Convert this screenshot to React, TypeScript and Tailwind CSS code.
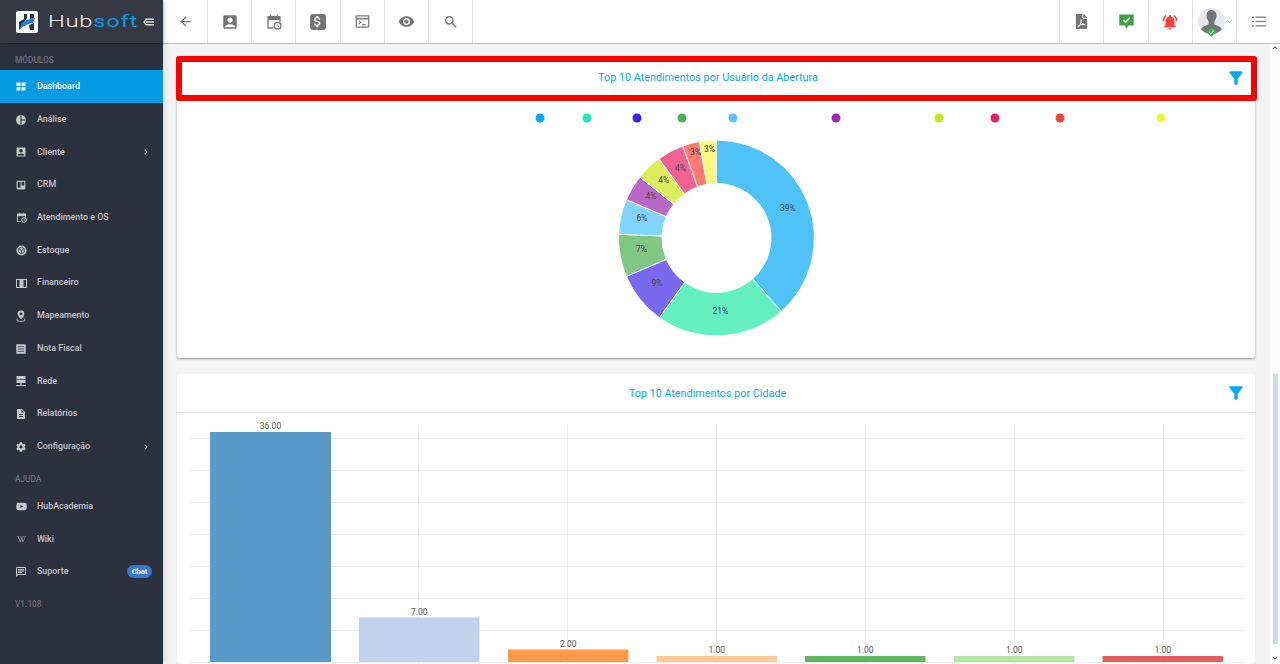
import React from "react";
import { MdAccountBox, MdArrowBack, MdFilterAlt, MdNotificationsActive, MdPieChart, MdSearch, MdVisibility, MdOutlineChat, MdExpandMore, MdExpandLess, MdDescription, MdAttachMoney } from "react-icons/md";
import { FaWikipediaW, FaYoutube, FaTrello, FaFilePdf, FaCog, FaChevronRight } from "react-icons/fa";

const CalClock = ({ size = 16 }: { size?: number }) => (
  <svg width={size} height={size} viewBox="0 0 24 24" fill="currentColor">
    <path d="M6 1h2v3H6zM16 1h2v3h-2z" />
    <path fillRule="evenodd" d="M3 3h18a1 1 0 0 1 1 1v8h-2V9H4v11h7v2H3a1 1 0 0 1-1-1V4a1 1 0 0 1 1-1z" />
    <path fillRule="evenodd" d="M17.500 11.500a6 6 0 1 1 0 12 6 6 0 0 1 0-12zm0 2a4 4 0 1 0 0 8 4 4 0 0 0 0-8zM17 14.500h1.300v3l2 1.200-.6 1-2.700-1.600z" />
  </svg>
);

const DashIcon = () => (
  <svg width="10" height="9" viewBox="0 0 10 9" fill="#fff">
    <path d="M0.500 0.500h4v3.500h-4zM5.500 0.500h4v3.500h-4zM0.500 5h4v3.500h-4zM5.500 5h4v3.500h-4z" />
  </svg>
);

const StockIcon = () => (
  <svg width="11" height="11" viewBox="0 0 11 11">
    <circle cx="5.500" cy="5.500" r="5" fill="currentColor" />
    <path d="M5.500 2.200l2.800 1.500v3.400L5.500 8.800 2.700 7.100V3.700zM2.700 3.700l2.800 1.700 2.800-1.700M5.500 5.400v3.400" fill="none" stroke="#2d303d" strokeWidth="0.8" />
  </svg>
);

const MoneyIcon = () => (
  <svg width="11" height="9" viewBox="0 0 11 9">
    <rect x="0.500" y="0.500" width="10" height="8" fill="none" stroke="currentColor" />
    <rect x="3.500" y="1" width="4" height="7" fill="currentColor" />
  </svg>
);

const MapIcon = () => (
  <svg width="10" height="12" viewBox="0 0 10 12">
    <path fillRule="evenodd" d="M5 0.500a3.400 3.400 0 0 1 3.400 3.400C8.400 6.200 5 9 5 9S1.600 6.200 1.600 3.900A3.400 3.400 0 0 1 5 0.500zm0 2a1.400 1.400 0 1 0 0 2.800 1.400 1.400 0 0 0 0-2.800z" fill="currentColor" />
    <path d="M2 8.800C1 9.200 0.700 9.600 0.700 10c0 .8 2 1.400 4.300 1.400s4.300-.6 4.300-1.400c0-.4-.3-.8-1.300-1.200" fill="none" stroke="currentColor" />
  </svg>
);

const NoteIcon = () => (
  <svg width="10" height="10" viewBox="0 0 10 10">
    <rect width="9.500" height="9.500" x="0.250" y="0.250" rx="0.500" fill="currentColor" />
    <path d="M1.800 2.700h6.400M1.800 5h6.400M1.800 7.300h6.400" stroke="#2d303d" strokeWidth="0.8" />
  </svg>
);

const NetIcon = () => (
  <svg width="10" height="11" viewBox="0 0 10 11" fill="currentColor">
    <rect x="0.500" y="0" width="9" height="3.200" />
    <rect x="0.500" y="3.800" width="9" height="3.200" />
    <rect x="4.400" y="7" width="1.200" height="2.500" />
    <rect x="0" y="9" width="10" height="1" />
  </svg>
);

const Terminal = ({ size = 16 }: { size?: number }) => (
  <svg width={size} height={size} viewBox="0 0 24 24" fill="none" stroke="currentColor" strokeWidth="2">
    <rect x="2" y="3" width="20" height="18" rx="1" />
    <path d="M2 7.500h20" strokeWidth="2.500" />
    <path d="M6 11l3 2.500L6 16M11.500 17H17" strokeWidth="1.800" />
  </svg>
);

const MsgCheck = () => (
  <svg width="15" height="15" viewBox="0 0 15 15">
    <path d="M1 0.500h13a.7.7 0 0 1 .7.7V10.800a.7.7 0 0 1-.7.7H9.500L7.500 14.500 5.500 11.500H1a.7.7 0 0 1-.7-.7V1.200A.7.7 0 0 1 1 .5z" fill="#43a047" />
    <path d="M4.500 6l2.200 2.200L10.700 3.800" fill="none" stroke="#fff" strokeWidth="1.500" />
  </svg>
);

const ListIcon = () => (
  <svg width="14" height="11" viewBox="0 0 14 11" fill="#8a8a8a">
    <rect x="0" y="0.500" width="2" height="1.400" />
    <rect x="3.500" y="0.500" width="10.500" height="1.400" />
    <rect x="0" y="4.800" width="2" height="1.400" />
    <rect x="3.500" y="4.800" width="10.500" height="1.400" />
    <rect x="0" y="9.100" width="2" height="1.400" />
    <rect x="3.500" y="9.100" width="10.500" height="1.400" />
  </svg>
);

const Avatar = () => (
  <svg width="27" height="30" viewBox="0 0 27 30">
    <circle cx="13.500" cy="14.500" r="13.500" fill="#e7e8ea" />
    <path d="M13.500 3c3.400 0 5 2.500 5 5.600 0 2.200-.9 4.400-2.100 5.600v3l5.600 2.800c1 .6 1.600 1.400 1.800 2.200A13.500 13.500 0 0 1 3.200 22.200c.2-.8.8-1.600 1.800-2.200l5.600-2.800v-3C9.400 13 8.500 10.800 8.500 8.600 8.500 5.500 10.100 3 13.500 3z" fill="#727477" />
    <path d="M8 25l5.500-4.500L19 25l-5.500 4.800z" fill="#4caf50" />
    <path d="M11 24.800l1.800 1.700 3.300-3" stroke="#fff" fill="none" strokeWidth="0.800" />
  </svg>
);

const Logo = () => (
  <svg width="22" height="22" viewBox="0 0 22 22">
    <rect width="22" height="22" rx="2" fill="#fff" />
    <path d="M3 19V11L8 8V3h3v4L3 19z" fill="#2d303d" />
    <path d="M3 19l3-7c3-3 8-4 13-5l-2 5c-4 .5-8 2-14 7z" fill="#1f7fd6" />
    <path d="M14 3h4v4l-4 1zM13 14l5-2v7h-4z" fill="#2d303d" />
  </svg>
);

type Item = { label: string; icon: React.ReactNode; active?: boolean; arrow?: boolean; badge?: string };

const modules: Item[] = [
  { label: "Dashboard", icon: <DashIcon />, active: true },
  { label: "Análise", icon: <MdPieChart size={12} /> },
  { label: "Cliente", icon: <MdAccountBox size={12} />, arrow: true },
  { label: "CRM", icon: <FaTrello size={10} /> },
  { label: "Atendimento e OS", icon: <CalClock size={11} /> },
  { label: "Estoque", icon: <StockIcon /> },
  { label: "Financeiro", icon: <MoneyIcon /> },
  { label: "Mapeamento", icon: <MapIcon /> },
  { label: "Nota Fiscal", icon: <NoteIcon /> },
  { label: "Rede", icon: <NetIcon /> },
  { label: "Relatórios", icon: <MdDescription size={12} /> },
  { label: "Configuração", icon: <FaCog size={10} />, arrow: true },
];
const help: Item[] = [
  { label: "HubAcademia", icon: <FaYoutube size={11} /> },
  { label: "Wiki", icon: <FaWikipediaW size={9} /> },
  { label: "Suporte", icon: <MdOutlineChat size={12} />, badge: "Chat" },
];

const NavRow = ({ item }: { item: Item }) => (
  <div className={`flex h-[32.73px] shrink-0 items-center pl-[14px] pr-[11px] pt-[1px] text-[8.9px] font-medium ${item.active ? "bg-[#039be5] text-white" : "text-[#c4c6cc]"}`}>
    <span className="flex w-[14px] justify-center">{item.icon}</span>
    <span className="ml-[9px] flex-1">{item.label}</span>
    {item.arrow && <FaChevronRight size={6} className="mr-[3px] text-[#c4c6cc]" />}
    {item.badge && (
      <span className="flex h-[13px] w-[25px] items-center justify-center rounded-full bg-[#2f7bd3] text-[7.5px] font-bold leading-none text-white">{item.badge}</span>
    )}
  </div>
);

const SectionLabel = ({ children }: { children: React.ReactNode }) => (
  <div className="flex h-[27px] shrink-0 items-end pb-[4px] pl-[15px] text-[8.3px] font-medium text-[#6c6f7b]">{children}</div>
);

const Sidebar = () => (
  <aside className="relative z-10 flex w-[163px] shrink-0 flex-col bg-[#2d303d] shadow-[2px_0_5px_rgba(0,0,0,0.12)]">
    <div className="flex h-[43px] shrink-0 items-center bg-[#363944] pl-[16px] shadow-[0_1px_2px_rgba(0,0,0,0.3)]">
      <Logo />
      <span className="ml-[10px] w-[95px]">
        <span className="inline-block origin-left scale-x-[1.4] text-[17px] font-light leading-none tracking-[0.5px] text-[#f1f1f1]">Hub<span className="font-normal text-[#039be5]">soft</span></span>
      </span>
      <svg width="11" height="8" viewBox="0 0 11 8" className="text-[#dcdcdc]" fill="none" stroke="currentColor" strokeWidth="1.400">
        <path d="M3.500 1L1 4l2.500 3M3 1.200h8M3 4h8M3 6.800h8" />
      </svg>
    </div>
    <SectionLabel>MÓDULOS</SectionLabel>
    {modules.map((m) => <NavRow key={m.label} item={m} />)}
    <SectionLabel>AJUDA</SectionLabel>
    {help.map((m) => <NavRow key={m.label} item={m} />)}
    <SectionLabel>V1.108</SectionLabel>
  </aside>
);

const TopCell = ({ children, left, first }: { children: React.ReactNode; left?: boolean; first?: boolean }) => (
  <div className={`flex h-full items-center justify-center border-[#e3e3e3] text-[#757575] ${first ? "w-[45px]" : "w-[44.2px]"} ${left ? "border-l" : "border-r"}`}>{children}</div>
);

const Topbar = () => (
  <header className="flex h-[44px] shrink-0 items-stretch justify-between border-b border-[#bdbdbd] bg-white">
    <div className="flex">
      <TopCell first><MdArrowBack size={15} /></TopCell>
      <TopCell><MdAccountBox size={18} /></TopCell>
      <TopCell><CalClock size={16} /></TopCell>
      <TopCell>
        <span className="flex h-[16px] w-[16px] items-center justify-center rounded-[3px] bg-[#757575] text-white"><MdAttachMoney size={15} /></span>
      </TopCell>
      <TopCell><Terminal size={15} /></TopCell>
      <TopCell><MdVisibility size={17} /></TopCell>
      <TopCell><MdSearch size={16} /></TopCell>
    </div>
    <div className="flex">
      <TopCell left><FaFilePdf size={15} /></TopCell>
      <TopCell left><MsgCheck /></TopCell>
      <TopCell left><MdNotificationsActive size={18} className="text-[#f44336]" /></TopCell>
      <TopCell left>
        <span className="ml-[4px] flex items-center"><Avatar /><MdExpandMore size={9} className="text-[#999]" /></span>
      </TopCell>
      <div className="flex w-[44px] items-center justify-center border-l border-[#e3e3e3] pl-[1px]">
        <ListIcon />
      </div>
    </div>
  </header>
);

const CardHeader = ({ title, height, iconRight, titleClass }: { title: string; height: string; iconRight: string; titleClass?: string }) => (
  <div className={`relative flex items-center justify-center pr-[17px] text-[10.8px] text-[#03a9f4] ${height}`}>
    <span className={titleClass}>{title}</span>
    <MdFilterAlt size={20} className={`absolute top-1/2 -translate-y-[11px] text-[#03a9f4] ${iconRight}`} />
  </div>
);

const polar = (r: number, pct: number, cx: number, cy: number) => {
  const a = (pct / 100) * 2 * Math.PI;
  return [cx + r * Math.sin(a), cy - r * Math.cos(a)];
};

const slices: { from: number; to: number; color: string; label: string; at?: [number, number] }[] = [
  { from: 0, to: 38.5, color: "#4fc3f7", label: "39%" },
  { from: 38.5, to: 59.9, color: "#64f0c0", label: "21%" },
  { from: 59.9, to: 68.6, color: "#7b68ee", label: "9%" },
  { from: 68.6, to: 75.6, color: "#81c784", label: "7%" },
  { from: 75.6, to: 81.4, color: "#81d4fa", label: "6%" },
  { from: 81.4, to: 85.7, color: "#ba68c8", label: "4%" },
  { from: 85.7, to: 90, color: "#dcee5c", label: "4%" },
  { from: 90, to: 94.4, color: "#f06292", label: "4%" },
  { from: 94.4, to: 97.2, color: "#ff7a70", label: "3%", at: [518.5, 53.7] },
  { from: 97.2, to: 100, color: "#f8f97e", label: "3%", at: [532.5, 51] },
];

const legend = [
  [540, "#03a9f4"], [587, "#1de9b6"], [637, "#3d1fe8"], [682, "#4caf50"], [733, "#5cc4fb"],
  [836, "#9c27b0"], [939, "#c6e61a"], [995, "#e91e63"], [1060, "#f44336"], [1161, "#f0f53f"],
] as const;

const Donut = () => {
  const cx = 539.5, cy = 137, R = 98, r = 54.5;
  return (
    <svg width="1077" height="257" viewBox="0 0 1077 257" className="block">
      {legend.map(([x, c]) => <circle key={x} cx={x - 177} cy={17} r={4.5} fill={c} />)}
      {slices.map((s) => {
        const [x1, y1] = polar(R, s.from, cx, cy);
        const [x2, y2] = polar(R, s.to, cx, cy);
        const [x3, y3] = polar(r, s.to, cx, cy);
        const [x4, y4] = polar(r, s.from, cx, cy);
        const large = s.to - s.from > 50 ? 1 : 0;
        const [tx, ty] = s.at ?? polar((R + r) / 2, (s.from + s.to) / 2, cx, cy);
        return (
          <g key={s.from}>
            <path d={`M${x1} ${y1}A${R} ${R} 0 ${large} 1 ${x2} ${y2}L${x3} ${y3}A${r} ${r} 0 ${large} 0 ${x4} ${y4}Z`} fill={s.color} stroke="#fff" strokeWidth="1" />
            <text x={tx} y={ty} textAnchor="middle" fontSize="8.500" fill="#444">{s.label}</text>
          </g>
        );
      })}
    </svg>
  );
};

const bars = [
  { x: 210, w: 121, top: 432, c: "#5899c8", v: "36.00" },
  { x: 359, w: 120.5, top: 617.5, c: "#c0d2ec", v: "7.00" },
  { x: 508, w: 120.5, top: 649.5, c: "#fd9a4c", v: "2.00" },
  { x: 656.5, w: 120.5, top: 656, c: "#fdc994", v: "1.00" },
  { x: 805, w: 120.5, top: 656, c: "#5fb661", v: "1.00" },
  { x: 954, w: 120.5, top: 656, c: "#b2e6a4", v: "1.00" },
  { x: 1102.5, w: 120.5, top: 656, c: "#e35e5e", v: "1.00" },
];

const BarChart = () => {
  const ox = 177, oy = 413;
  return (
    <svg width="1077" height="251" viewBox="0 0 1077 251" className="block">
      {[438, 470, 502, 534, 566, 598, 630, 662].map((y) => (
        <line key={y} x1={189 - ox} x2={1245 - ox} y1={y + 0.5 - oy} y2={y + 0.5 - oy} stroke="#eeeeee" />
      ))}
      {[418.5, 567.5, 716.5, 865.5, 1014.5, 1163.5].map((x) => (
        <line key={x} x1={x - ox} x2={x - ox} y1={424 - oy} y2={251} stroke="#eeeeee" />
      ))}
      {bars.map((b) => (
        <g key={b.x}>
          <rect x={b.x - ox} y={b.top - oy} width={b.w} height={662 - b.top} fill={b.c} />
          <text x={b.x - ox + b.w / 2} y={b.top - oy - 3} textAnchor="middle" fontSize="8.500" fill="#555">{b.v}</text>
        </g>
      ))}
    </svg>
  );
};

export default function App() {
  return (
    <div className="flex h-[664px] w-[1280px] overflow-hidden bg-[#f4f4f4] font-['Roboto','Liberation_Sans',sans-serif]">
      <Sidebar />
      <main className="flex min-w-0 flex-1 flex-col">
        <Topbar />
        <div className="flex min-h-0 flex-1">
          <div className="min-w-0 flex-1 overflow-hidden pl-[14px] pr-[15px] pt-[12px]">
            <section className="rounded-[3px] bg-white shadow-[0_1px_2px_rgba(0,0,0,0.4)]">
              <div className="-ml-px -mr-[2px] rounded-[3px] border-[6px] border-[#ff0000]">
                <CardHeader title="Top 10 Atendimentos por Usuário da Abertura" height="h-[33px]" iconRight="right-[5px]" />
              </div>
              <Donut />
            </section>
            <section className="mt-[16px] rounded-[3px] bg-white shadow-[0_1px_2px_rgba(0,0,0,0.1)]">
              <div className="border-b border-[#e8e8e8] pt-[1px]">
                <CardHeader title="Top 10 Atendimentos por Cidade" height="h-[37px]" iconRight="right-[9px]" titleClass="pt-[2px]" />
              </div>
              <BarChart />
            </section>
          </div>
          <div className="flex w-[10px] shrink-0 flex-col items-center bg-[#fcfcfc]">
            <div className="flex h-[8px] w-full items-center justify-center"><MdExpandLess size={10} className="text-[#444]" /></div>
            <div className="mt-[322px] h-[270px] w-[5px] rounded-[1px] bg-[#cfdbe6]" />
            <div className="mt-[10px] flex h-[8px] w-full items-center justify-center"><MdExpandMore size={10} className="text-[#444]" /></div>
          </div>
        </div>
      </main>
    </div>
  );
}
